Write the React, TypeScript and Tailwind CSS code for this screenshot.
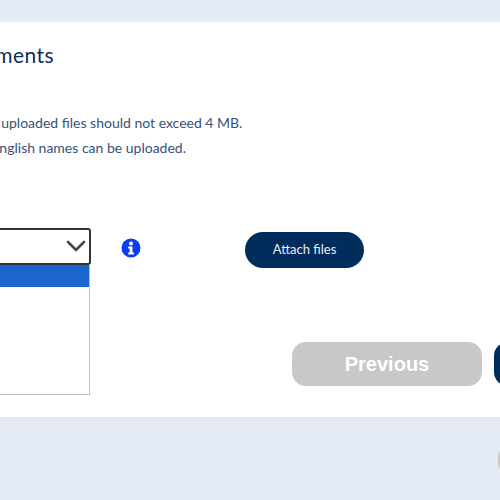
export default function App() {
  return (
    <div className="h-[500px] w-[500px] overflow-hidden bg-[#e4ebf4] pt-[22px] font-['Lato',sans-serif] text-[#0c2f57]">
      {/* White panel, page is scrolled sideways so the left part is cut off */}
      <div className="h-[395px] w-[700px] -ml-[120px] bg-white pl-[20px]">
        <h2 className="pt-[19px] text-[21px] leading-[28px] tracking-[0.45px] whitespace-nowrap w-[154px] text-right">
          Attachments
        </h2>

        <div className="mt-[41px] text-[14px] leading-[25px] text-[#35527a]">
          <p className="w-[340px] text-right whitespace-nowrap">
            The total size of uploaded files should not exceed 4 MB.
          </p>
          <p className="w-[284px] text-right whitespace-nowrap">
            Only files with English names can be uploaded.
          </p>
        </div>

        {/* Select row */}
        <div className="mt-[68px] flex items-start">
          <div className="relative w-[191px] shrink-0">
            <div className="flex h-[37px] items-center justify-end rounded-[3px] border-2 border-[#2f3437] pr-[3px]">
              <svg width="20" height="13" viewBox="0 0 20 13" fill="none" stroke="#3f4a50" strokeWidth="2.6" strokeLinecap="round">
                <path d="M2 2l8 8 8-8" />
              </svg>
            </div>
            <div className="absolute left-0 top-[37px] h-[130px] w-[190px] border-r-[1.5px] border-b-[1.5px] border-[#bdbdbd] bg-white">
              <div className="h-[22px] bg-[#1a66cc]" />
            </div>
          </div>

          <svg className="ml-[30px] mt-[10px] shrink-0" width="20" height="20" viewBox="0 0 20 20">
            <circle cx="10" cy="10" r="9.5" fill="#0a3cf0" />
            <circle cx="10" cy="5.4" r="2" fill="#fff" />
            <path d="M7.2 8.5h4.3v6h1.4v2H7.2v-2h1.4v-4H7.2z" fill="#fff" />
          </svg>

          <button className="ml-[104px] mt-[4px] h-[36px] w-[119px] shrink-0 rounded-full bg-[#002d5b] text-[13px] text-[#e6edf5]">
            Attach files
          </button>
        </div>

        {/* Previous / Next */}
        <div className="mt-[74px] ml-[392px] flex gap-[12px] font-['Liberation_Sans',sans-serif]">
          <button className="h-[44px] w-[190px] shrink-0 rounded-[14px] bg-[#c8c8c8] text-[20px] font-bold text-white">
            Previous
          </button>
          <button className="h-[44px] w-[190px] shrink-0 rounded-[14px] bg-[#002d5b] text-[20px] font-bold text-white">
            Next
          </button>
        </div>
      </div>

      {/* Edge of a floating button at the bottom right */}
      <div className="mt-[30px] ml-[498px] h-[26px] w-[30px] rounded-l-[10px] bg-[#c8c8c8]" />
    </div>
  );
}
